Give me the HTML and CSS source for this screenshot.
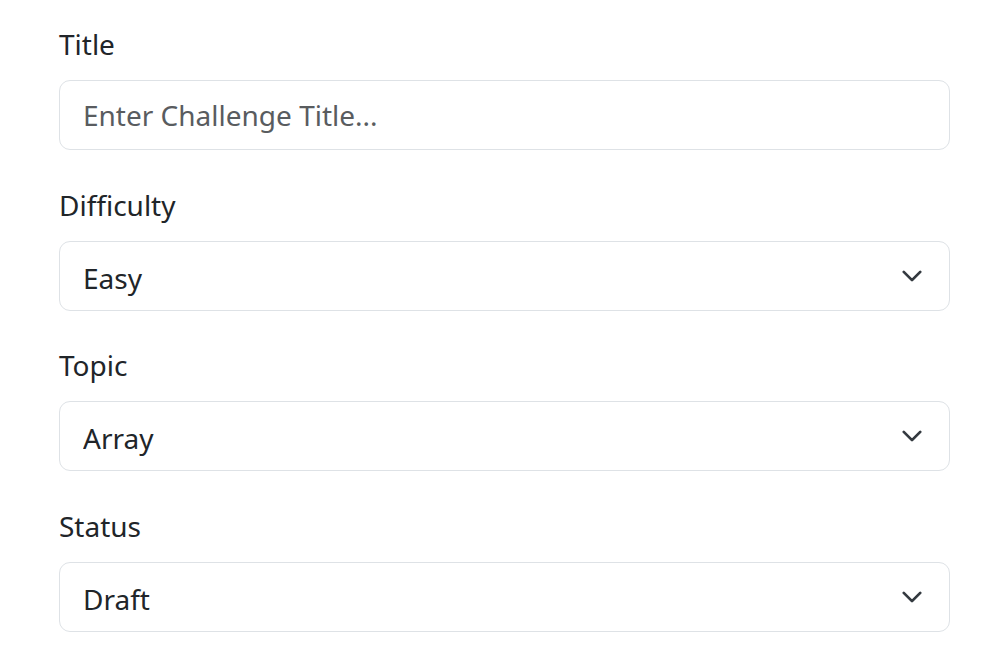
FILE: index.html
```html
<!DOCTYPE html>
<html lang="en">
<head>
<meta charset="utf-8">
<title>Challenge Form</title>
<link rel="stylesheet" href="styles.css">
</head>
<body>
<form class="form">
  <div class="field">
    <label class="label" for="title">Title</label>
    <input class="control" id="title" type="text" placeholder="Enter Challenge Title...">
  </div>
  <div class="field">
    <label class="label" for="difficulty">Difficulty</label>
    <select class="control select" id="difficulty">
      <option>Easy</option>
      <option>Medium</option>
      <option>Hard</option>
    </select>
  </div>
  <div class="field">
    <label class="label" for="topic">Topic</label>
    <select class="control select" id="topic">
      <option>Array</option>
      <option>String</option>
    </select>
  </div>
  <div class="field">
    <label class="label" for="status">Status</label>
    <select class="control select" id="status">
      <option>Draft</option>
      <option>Published</option>
    </select>
  </div>
</form>
</body>
</html>
```

FILE: styles.css
```css
html, body {
  margin: 0;
  padding: 0;
  background: #ffffff;
}
body {
  font-family: "Segoe UI", "Noto Sans", "Open Sans", sans-serif;
  color: #212529;
}
.form {
  width: 891px;
  padding: 22px 0 0 59px;
  display: flex;
  flex-direction: column;
  gap: 32.5px;
}
.field {
  display: flex;
  flex-direction: column;
}
.label {
  font-size: 28px;
  line-height: 44px;
  margin-bottom: 14px;
}
.control {
  box-sizing: border-box;
  width: 891px;
  height: 70px;
  margin: 0;
  padding: 0 23px;
  font-family: inherit;
  font-size: 28px;
  color: #212529;
  background-color: #fff;
  border: 1px solid #dee2e6;
  border-radius: 11px;
  outline: none;
}
.control::placeholder {
  color: #595c5f;
  opacity: 1;
}
.select {
  appearance: none;
  -webkit-appearance: none;
  padding: 4px 70px 0 23px;
  background-image: url("data:image/svg+xml,%3csvg xmlns='http://www.w3.org/2000/svg' viewBox='0 0 16 16'%3e%3cpath fill='none' stroke='%23343a40' stroke-linecap='round' stroke-linejoin='round' stroke-width='2' d='m2 5 6 6 6-6'/%3e%3c/svg%3e");
  background-repeat: no-repeat;
  background-position: right 22px center;
  background-size: 30px 22px;
}
```
